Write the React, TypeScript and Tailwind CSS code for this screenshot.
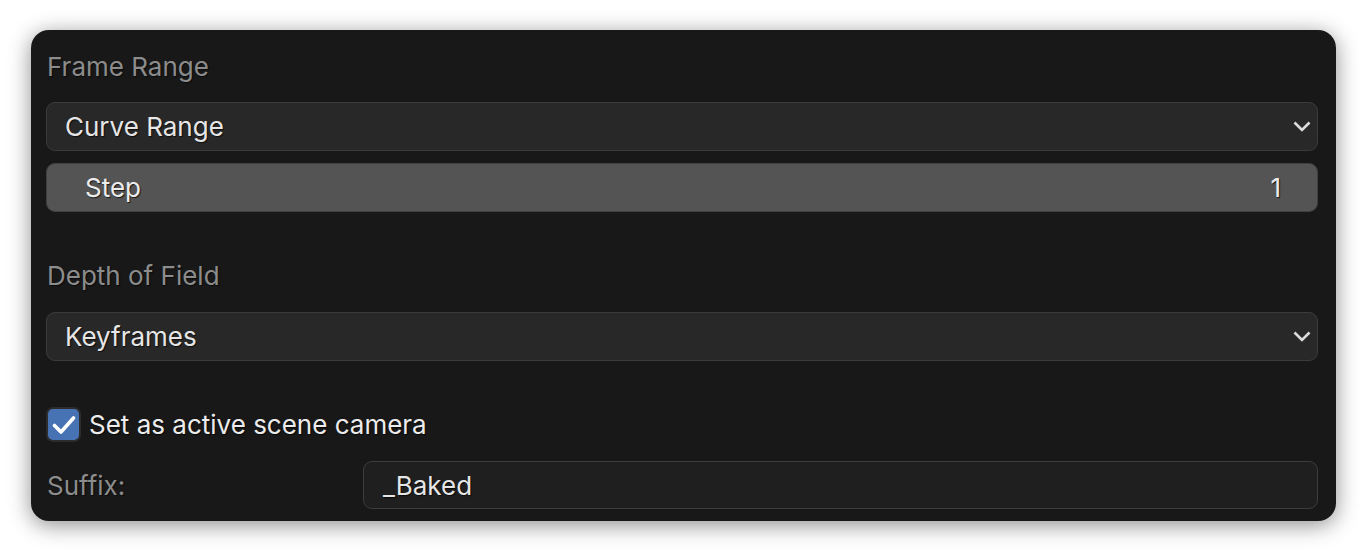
type SelectProps = { value: string };

const Chevron = () => (
  <svg width="18" height="11" viewBox="0 0 18 11" fill="none" className="text-[#dcdcdc]">
    <polyline points="1.5,1.5 9,9 16.5,1.5" stroke="currentColor" strokeWidth="2.6" strokeLinejoin="miter" />
  </svg>
);

const Select = ({ value }: SelectProps) => (
  <div className="flex h-[49px] items-center justify-between rounded-[9px] border border-[#3b3b3b] bg-[#282828] pl-[18px] pr-[6px]">
    <span className="text-[#e6e6e6] [text-shadow:1px_1px_1px_rgba(0,0,0,0.7)]">{value}</span>
    <Chevron />
  </div>
);

const Label = ({ children }: { children: string }) => (
  <div className="flex h-[36px] items-center pl-[1px] text-[#8c8c8c] [text-shadow:1px_1px_1px_rgba(0,0,0,0.6)]">
    {children}
  </div>
);

export default function App() {
  return (
    <div className="min-h-[551px] bg-white pt-[30px] pl-[31px] pr-[30px] font-['Inter',sans-serif] text-[26px]">
      <div className="flex flex-col rounded-[18px] bg-[#181818] pt-[18px] pb-[12px] pl-[15px] pr-[18px] shadow-[0_4px_22px_rgba(0,0,0,0.45)]">
        <Label>Frame Range</Label>
        <div className="mt-[18px]">
          <Select value="Curve Range" />
        </div>
        <div className="mt-[12px] flex h-[49px] items-center justify-between rounded-[9px] border border-[#404040] bg-[#545454] pl-[38px] pr-[36px] text-[#ececec] [text-shadow:1px_1px_1px_rgba(0,0,0,0.7)]">
          <span>Step</span>
          <span>1</span>
        </div>
        <div className="mt-[45px]">
          <Label>Depth of Field</Label>
        </div>
        <div className="mt-[19px]">
          <Select value="Keyframes" />
        </div>
        <div className="mt-[46px] flex h-[35px] items-center gap-[8px]">
          <div className="flex h-[35px] w-[35px] items-center justify-center rounded-[7px] border-2 border-[#2c2c2c] bg-[#4772b3]">
            <svg width="24" height="20" viewBox="0 0 24 20" fill="none">
              <polyline points="2.5,10.5 9,17 21.5,3" stroke="white" strokeWidth="3.6" strokeLinecap="round" strokeLinejoin="round" />
            </svg>
          </div>
          <span className="text-[#ececec] [text-shadow:1px_1px_1px_rgba(0,0,0,0.7)]">Set as active scene camera</span>
        </div>
        <div className="mt-[19px] flex h-[48px] items-center">
          <div className="w-[317px] pl-[1px] text-[#8c8c8c] [text-shadow:1px_1px_1px_rgba(0,0,0,0.6)]">Suffix:</div>
          <div className="flex h-[48px] flex-1 items-center rounded-[9px] border border-[#3d3d3d] bg-[#1f1f1f] pl-[19px] text-[#e6e6e6] [text-shadow:1px_1px_1px_rgba(0,0,0,0.7)]">
            _Baked
          </div>
        </div>
      </div>
    </div>
  );
}
